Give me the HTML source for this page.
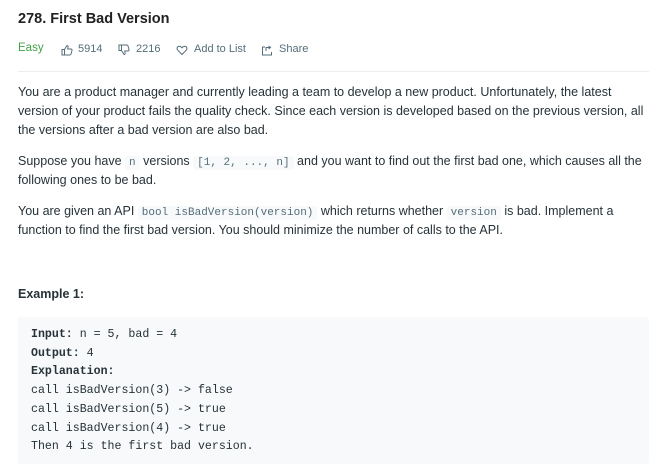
<!DOCTYPE html>
<html><head><style>
body{margin:0;background:#fff;font-family:"Liberation Sans",sans-serif;color:#263238;}
.wrap{position:absolute;left:18px;top:0;width:631px;}
h1{position:absolute;top:11px;left:0;margin:0;font-size:14.5px;font-weight:bold;color:#212121;}
.meta{position:absolute;top:43px;left:0;font-size:11px;color:#546e7a;white-space:nowrap;}
.meta span{position:absolute;top:0;}
.meta svg{position:absolute;top:1px;}
.hr{position:absolute;top:71px;left:0;width:631px;height:1px;background:#eceff1;}
p{position:absolute;left:0;margin:0;font-size:12.5px;line-height:19px;width:631px;}
code{font-family:"Liberation Mono",monospace;font-size:11px;line-height:1;background:#f7f9fa;color:#546e7a;padding:1px 4px;border-radius:3px;}
.ex{position:absolute;top:287px;left:0;font-size:12.5px;font-weight:bold;}
pre{position:absolute;top:317px;left:0;width:605px;height:121px;margin:0;padding:9px 13px 17px;background:#f7f9fa;border-radius:3px;font-family:"Liberation Mono",monospace;font-size:11.6px;line-height:18.7px;color:#263238;}
</style></head><body><div class="wrap">
<h1>278. First Bad Version</h1>
<div class="meta">
<span style="left:0;color:#43a047;font-size:11.5px;top:-1px">Easy</span>
<svg style="left:43px" width="12" height="12" viewBox="0 0 12 12" fill="none" stroke="#546e7a" stroke-width="1"><path d="M1 5.5h2.5v5.5H1zM3.5 5.5L6 1.5c1 0 1.3.8 1 2L6.7 5h3.3c.8 0 1.2.6 1 1.3l-1 3.8c-.2.6-.6.9-1.2.9H3.5"/></svg>
<span style="left:60px">5914</span>
<svg style="left:100px" width="12" height="12" viewBox="0 0 12 12" fill="none" stroke="#546e7a" stroke-width="1"><path d="M1 1h2.5v5.5H1zM3.5 6.5L6 10.5c1 0 1.3-.8 1-2L6.7 7h3.3c.8 0 1.2-.6 1-1.3L10 1.9C9.8 1.3 9.4 1 8.8 1H3.5"/></svg>
<span style="left:118px">2216</span>
<svg style="left:158px" width="12" height="12" viewBox="0 0 12 12" fill="none" stroke="#546e7a" stroke-width="1"><path d="M6 10.5L1.8 6.2C.5 4.8 1 2.2 3.3 2.2 4.6 2.2 5.4 3 6 3.8 6.6 3 7.4 2.2 8.7 2.2 11 2.2 11.5 4.8 10.2 6.2z"/></svg>
<span style="left:176px">Add to List</span>
<svg style="left:243px" width="12" height="12" viewBox="0 0 12 12" fill="none" stroke="#546e7a" stroke-width="1"><path d="M4 3H1.5v8h9V8M5 7V3.5h4M7.5 2L9.5 3.5 7.5 5"/></svg>
<span style="left:261px">Share</span>
</div>
<div class="hr"></div>
<p style="top:83px">You are a product manager and currently leading a team to develop a new product. Unfortunately, the latest version of your product fails the quality check. Since each version is developed based on the previous version, all the versions after a bad version are also bad.</p>
<p style="top:152px">Suppose you have <code>n</code> versions <code>[1, 2, ..., n]</code> and you want to find out the first bad one, which causes all the following ones to be bad.</p>
<p style="top:202px">You are given an API <code>bool isBadVersion(version)</code> which returns whether <code>version</code> is bad. Implement a function to find the first bad version. You should minimize the number of calls to the API.</p>
<div class="ex">Example 1:</div>
<pre><b>Input:</b> n = 5, bad = 4
<b>Output:</b> 4
<b>Explanation:</b>
call isBadVersion(3) -&gt; false
call isBadVersion(5) -&gt; true
call isBadVersion(4) -&gt; true
Then 4 is the first bad version.</pre>
</div></body></html>
